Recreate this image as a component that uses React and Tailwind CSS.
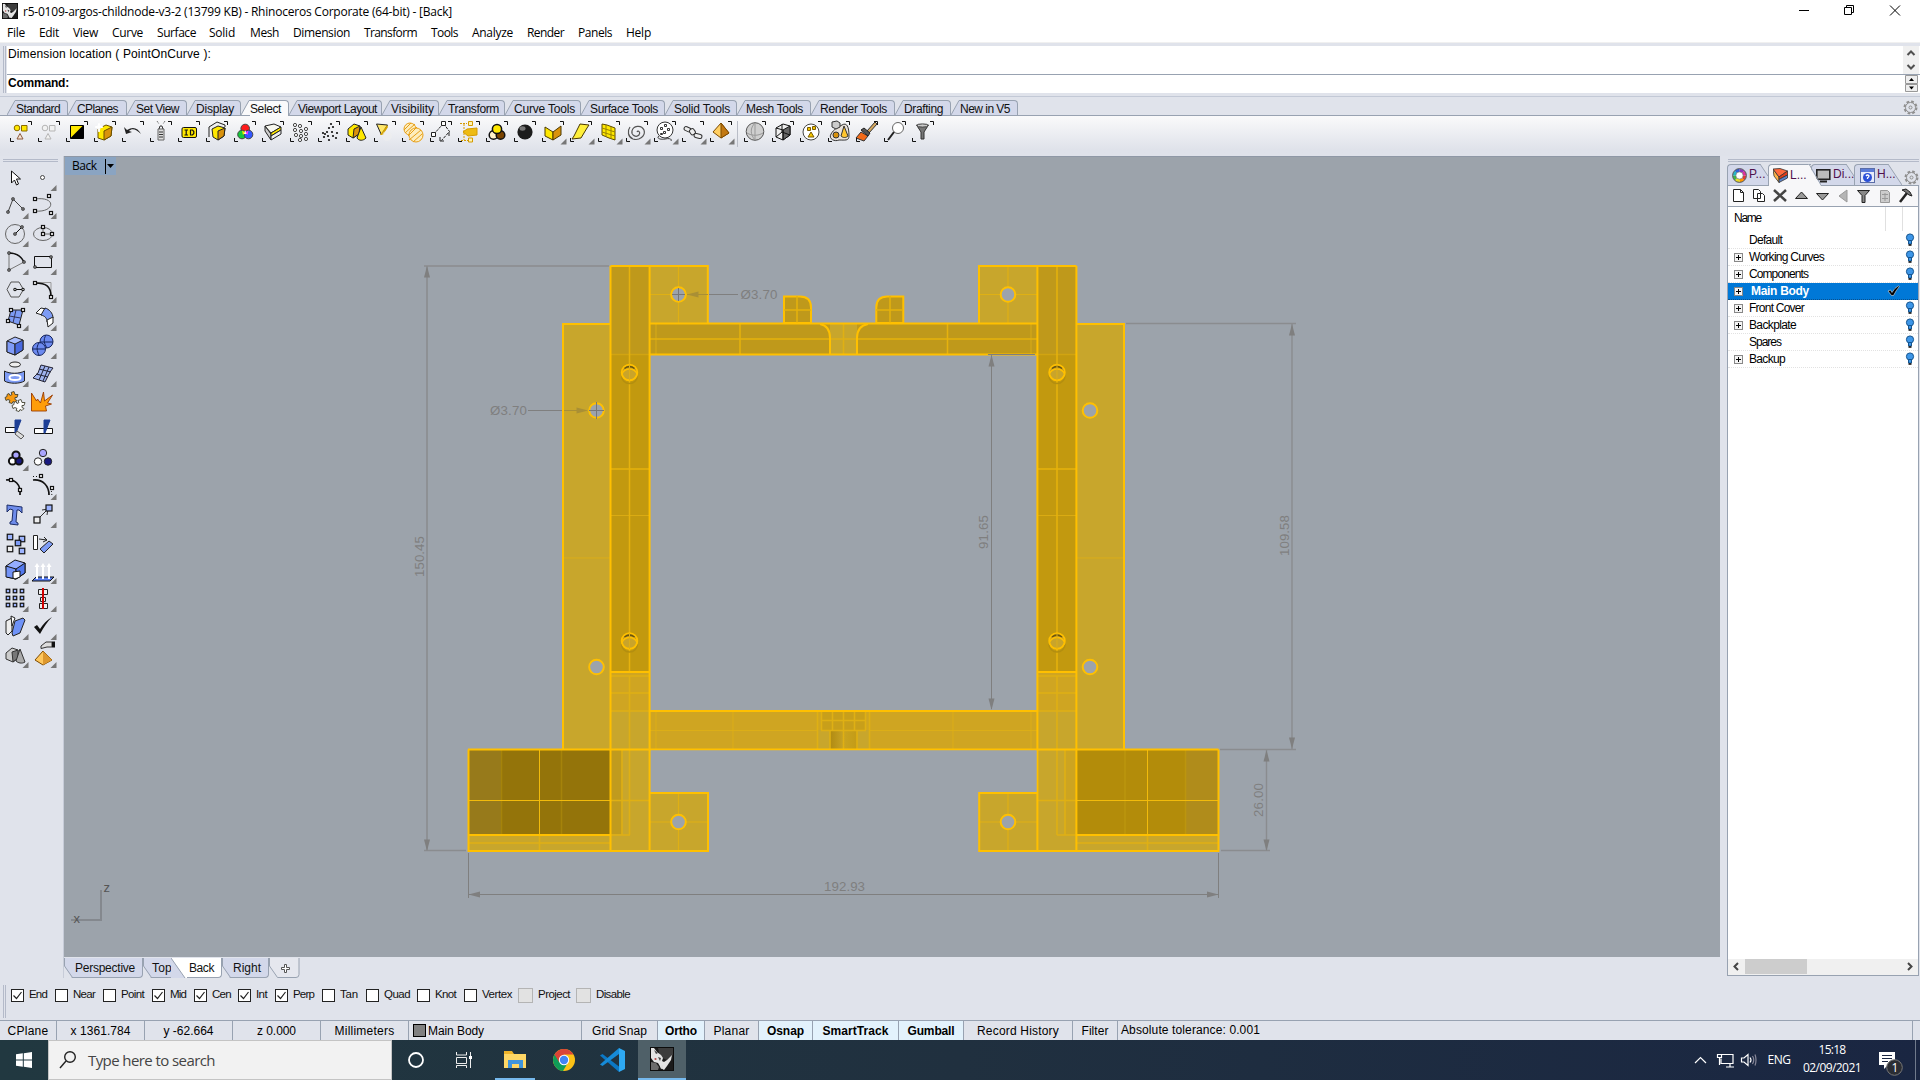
import React, { useLayoutEffect, useRef, useState } from "react";

/* Text whose letter spacing is adjusted so that it fills `w` pixels. */
function Fit({ w, className = "", children }) {
  const ref = useRef(null);
  const [sp, setSp] = useState(0);
  useLayoutEffect(() => {
    const n = String(children).length;
    setSp((w - ref.current.getBoundingClientRect().width) / n);
  }, []);
  return (
    <span ref={ref} className={"inline-block whitespace-pre " + className} style={{ letterSpacing: sp + "px" }}>
      {children}
    </span>
  );
}

const SEGOE = "font-['Open_Sans','Noto_Sans',sans-serif]";
const ARIAL = "font-['Liberation_Sans',Arial,sans-serif]";

function RhinoMark({ className }) {
  return (
    <svg className={className} viewBox="0 0 24 24">
      <rect width="24" height="24" fill="#1b1b1b" />
      <path d="M8 1h15v7l-6 5-7-3z" fill="#3c3c3c" />
      <path d="M1 1h3l3 4 4 3 2 3-1 3 2 1 3-2 5-5-1 5-4 6-3 4-3-2-3-5-4-1-3-4z" fill="#e4e4e4" />
      <path d="M1 15l5 1 3 4-1 3H1z" fill="#6c6c6c" />
      <path d="M4 3l4 3-2 1zM8 10l3 1-1 3z" fill="#444" />
      <circle cx="5.500" cy="12" r="1.100" fill="#b04a4a" />
      <path d="M10 19l3-1v3l-2 1z" fill="#ddd" />
      <rect x=".5" y=".5" width="23" height="23" fill="none" stroke="#0c0c0c" />
    </svg>
  );
}

const MENUS = [["File", 32, 18], ["Edit", 34, 20], ["View", 39, 25], ["Curve", 45, 31], ["Surface", 52, 39], ["Solid", 41, 26], ["Mesh", 43, 29], ["Dimension", 71, 57], ["Transform", 67, 53], ["Tools", 41, 27], ["Analyze", 55, 41], ["Render", 51, 37], ["Panels", 48, 34], ["Help", 40, 25]];

function TitleAndMenu() {
  return (
    <div className={"bg-white h-[42px] shrink-0 text-[12px] text-black " + SEGOE}>
      <div className="flex items-center h-[22px] pl-[2px]">
        <RhinoMark className="w-[16px] h-[16px]" />
        <Fit w={429} className="ml-[5px] mt-px">r5-0109-argos-childnode-v3-2 (13799 KB) - Rhinoceros Corporate (64-bit) - [Back]</Fit>
        <div className="flex-1" />
        <svg className="w-[120px] h-[22px]" fill="none" stroke="#000">
          <path d="M3 10.500h10" />
          <path d="M48.500 7.500h7v7h-7zM50.500 7.500v-2h7v7h-2" />
          <path d="M94 5.500l10 10M104 5.500l-10 10" />
        </svg>
        <div className="w-[4px]" />
      </div>
      <div className="flex items-center h-[21px] pl-[7px]">
        {MENUS.map(([t, slot, w]) => (
          <div key={t} className="shrink-0" style={{ width: slot }}><Fit w={w}>{t}</Fit></div>
        ))}
      </div>
    </div>
  );
}

function CommandArea() {
  return (
    <div className={"h-[55px] shrink-0 flex flex-col text-[12px] text-black border-b border-[#c3c9d6] " + ARIAL}>
      <div className="h-[1px] bg-[#f0f0f0]" />
      <div className="h-[3px]" />
      <div className="flex">
        <div className="w-[7px] pl-[3px] flex gap-[1px]"><i className="w-px bg-[#b4bac9]" /><i className="w-px bg-[#b4bac9]" /></div>
        <div className="flex-1">
          <div className="h-[29px] bg-white border-b border-[#98a2b1] flex justify-between">
            <Fit w={203} className="ml-px leading-[17px]">Dimension location ( PointOnCurve ):</Fit>
            <svg className="w-[16px] h-[28px] mr-px bg-[#f0f0f0]" fill="none" stroke="#505050" strokeWidth="2"><path d="M4.500 9l3.500-3.500L11.500 9M4.500 19L8 22.500 11.500 19" /></svg>
          </div>
          <div className="h-[18px] bg-white flex justify-between">
            <Fit w={61} className="ml-px font-bold leading-[16px]">Command:</Fit>
            <svg className="w-[15px] h-[18px] mr-px"><path d="M1.500.5h12v8h-12zM1.500 9.500h12v7h-12z" fill="#eee" stroke="#999" /><path d="M5 6h5L7.500 3zM5 11.500h5l-2.500 3z" fill="#000" /></svg>
          </div>
        </div>
      </div>
    </div>
  );
}

const TABS = [["Standard", 61, 44], ["CPlanes", 59, 41], ["Set View", 60, 43], ["Display", 54, 38], ["Select", 48, 31], ["Viewport Layout", 93, 79], ["Visibility", 57, 43], ["Transform", 66, 51], ["Curve Tools", 76, 61], ["Surface Tools", 84, 68], ["Solid Tools", 72, 56], ["Mesh Tools", 74, 57], ["Render Tools", 84, 67], ["Drafting", 56, 39], ["New in V5", 67, 50]];

function ToolTabs() {
  return (
    <div className={"h-[19px] shrink-0 flex items-end text-[12px] text-[#111] border-b border-[#98a2b1] pl-[7px] pr-[2px] " + ARIAL}>
      {TABS.map(([t, slot, w]) => {
        const on = t === "Select";
        return (
          <div key={t} className="flex h-[15px] shrink-0" style={{ width: slot }}>
            <svg className="w-[9px] h-[15px] shrink-0"><path d="M0 15L8 1h2v15z" fill={on ? "#fafafb" : "#d3d8ea"} /><path d="M0 15L8 .5h2" fill="none" stroke="#98a2b1" /></svg>
            <div className={"flex-1 border-t border-r border-[#98a2b1] rounded-tr-[4px] leading-[16px] " + (on ? "bg-[#fafafb] h-[16px]" : "bg-[#d3d8ea] h-[15px]")}><Fit w={w}>{t}</Fit></div>
          </div>
        );
      })}
      <div className="flex-1" />
      <Gear />
    </div>
  );
}

function Gear() {
  return (
    <svg className="w-[15px] h-[15px] shrink-0" viewBox="0 0 15 15" fill="none" stroke="#8f8f8f">
      <circle cx="7.500" cy="7.500" r="6" strokeWidth="2" strokeDasharray="2.700 2" />
      <circle cx="7.500" cy="7.500" r="5" />
      <circle cx="7.500" cy="7.500" r="1.500" />
    </svg>
  );
}

const Y = "#ffe800", K = "#222", O = "#d9920c";
const TOP_ICONS = [
  <g stroke="#8a6a00"><circle cx="10" cy="10" r="2.800" fill={Y} /><path d="M14.500 7.500h5.500v5.500h-5.500z" fill={Y} /><path d="M10 21l3-5.500 3 5.500z" fill="#f4e3d6" stroke="#8d5a3c" /></g>,
  <g stroke="#b5b5b5" fill="#f2f2f2"><circle cx="10" cy="10" r="2.800" /><path d="M14.500 7.500h5.500v5.500h-5.500zM10 21l3-5.500 3 5.500z" /></g>,
  <g><path d="M7.500 7.500h13v13h-13z" fill="#000" stroke="#000" /><path d="M8 8h11.500L8 19.500z" fill={Y} /></g>,
  <g stroke="#6b5000"><path d="M7 11l8-4 6 2-1 9-7 4-6-2z" fill={Y} /><path d="M13 13l8-4-1 9-7 4z" fill={O} /><path d="M8 5l1 3 3 1-3 1-1 4-1-4-3-1 3-1z" fill="#fff" stroke="#fff" /></g>,
  <g><path d="M5 9l2 7 6-2-3-1c3-3 7-2 12 3-3-6-8-8-14-4z" fill={K} /></g>,
  <g fill="none" stroke="#666"><path d="M11 11h6v11h-6z" fill="#ddd" /><path d="M12 11l1-3h2l1 3M12 14h4M12 16.500h4M12 19h4" stroke="#333" /><path d="M10 3l2 3M18 3l-2 3" stroke="#777" strokeDasharray="2 1" /></g>,
  <g><rect x="7" y="9.500" width="14.500" height="10" rx="1.500" fill={Y} stroke="#111" /><path d="M9.500 12h3.500M9.500 17H13M11.200 12v5M15.500 12v5M15 12h2.500l1.300 1.500v2L17.500 17H15" fill="none" stroke="#111" strokeWidth="1.200" /></g>,
  <g stroke={K}><path d="M6 19V9l8-5 8 3v2" fill="#eee" /><path d="M9 11l6-3 7 2-1 8-6 4-5-3z" fill={Y} /><path d="M15 13l7-3-1 8-6 4z" fill={O} /></g>,
  <g stroke="#444"><circle cx="14.200" cy="10.500" r="4.300" fill="#ff1a1a" /><circle cx="11" cy="16.500" r="4.300" fill="#14c93a" /><circle cx="17.500" cy="16.500" r="4.300" fill="#3358ff" /><path d="M14.200 12.500l2 3.500h-4z" fill="#fff" stroke="none" /><path d="M11 12.500l3 2-2 2.500z" fill="#ffe600" stroke="none" /><path d="M17.500 12.500l-3 2 2 2.500z" fill="#f3f" stroke="none" /></g>,
  <g stroke={K}><path d="M6 8l6 8v6l-6-9z" fill="#ccc" /><path d="M6 8l9-2 7 3-10 6z" fill="#f8f8f0" /><path d="M12 15l10-6v3l-10 6z" fill={Y} /><path d="M12 18l10-6v4l-10 6z" fill="#eee" /></g>,
  <g fill="#fff" stroke="#444">{[[8, 7], [13, 8], [8, 12], [14, 13], [19, 11], [9, 17], [14, 18], [19, 16], [19, 21], [13, 22]].map((p, i) => <circle key={i} cx={p[0]} cy={p[1]} r="1.600" />)}</g>,
  <g fill="#111">{[[16, 6], [18, 9], [14, 10], [8, 15], [12, 14], [17, 14], [9, 19], [13, 18], [18, 18], [22, 15], [21, 20], [14, 22], [10, 16]].map((p, i) => <circle key={i} cx={p[0]} cy={p[1]} r="1.100" />)}</g>,
  <g stroke={K}><path d="M5 11l6-5 6 2-1 8-6 4-5-3z" fill={Y} /><path d="M11 11l6-3-1 8-6 4z" fill={O} /><path d="M18 9l5 11c-3 3-7 3-9 0z" fill={Y} /></g>,
  <g><path d="M5.500 6l11 1-6 10z" fill="#ffe76a" stroke={K} /><path d="M9 17l7-10 1 2-5 8z" fill="#d3a200" /><circle cx="16" cy="18" r="5" fill="#eeeeef" opacity=".6" /></g>,
  <g><circle cx="11" cy="11" r="6" fill="#fdedbd" stroke="#e79f16" /><circle cx="17" cy="17" r="7" fill="#fdedbd" stroke="#e79f16" /><path d="M5 12l7-7M6 15l10-9M9 18l9-9M10 22l12-10M14 24l9-8" stroke="#e79f16" /></g>,
  <g fill="#fff" stroke="#222"><path d="M16.500 5.500l6 8-8 9M6.500 16.500l9-10" fill="none" strokeDasharray="3 1" /><path d="M14.500 3.500h4v4h-4zM4.500 14.500h4v4h-4z" /><path d="M13 23v-4M13 23h4M22 14v4" /></g>,
  <g fill="none" stroke="#d49b00"><path d="M5 5.500h7M9 6v16M6 22.500h7" strokeDasharray="2 1" /><path d="M13.500 3.500h4v4h-4zM13.500 20h4v4h-4z" fill="#fff3b0" /><path d="M8 14l4-3 10-1v7l-9 1z" fill="#eebb12" /></g>,
  <g stroke="#111" strokeWidth="1.500"><circle cx="10.500" cy="17" r="4.300" fill="#fff2c9" /><circle cx="17.500" cy="17" r="4.300" fill="#7a4300" /><circle cx="14" cy="11" r="4.600" fill={Y} /></g>,
  <g><circle cx="14" cy="14" r="7.600" fill="#1c1c1c" /><ellipse cx="11.500" cy="10.500" rx="3" ry="2.200" fill="#777" /></g>,
  <g stroke="#4a3800"><path d="M6 9l8 5v8l-8-4z" fill={Y} /><path d="M14 14l8-6v9l-8 5z" fill={O} /></g>,
  <path d="M13 6l9 1-2 3-6 10-9 1 2-3z" fill="#ffef3a" stroke="#4a3800" />,
  <g stroke="#5c4a00"><path d="M7 6l5 1 8 3v12l-6-2-7-3z" fill={Y} /><path d="M11 7v12M16 9v12M7 10l13 4M7 14l13 4" fill="none" stroke="#9a8300" /></g>,
  <path d="M14 14c1-2 4 0 2 3-3 3-8 0-7-4 1-5 9-7 12-1 2 6-5 11-11 9-5-2-6-8-3-12" fill="none" stroke="#555" strokeWidth="1.200" />,
  <g stroke="#333" fill="#fff"><circle cx="14" cy="12" r="8" /><path d="M9.500 9.500h2v2h-2zM13.500 6.500h2v2h-2zM16.500 10.500h2v2h-2zM12.500 13.500h2v2h-2zM9.500 15.500h2v1h-2z" /><path d="M8 18c-3 2 1 4 6 3s7 0 6 2" fill="none" /></g>,
  <g fill="#eee" stroke="#333"><rect x="5" y="9" width="7" height="4" rx="2" transform="rotate(25 8 11)" /><rect x="11" y="11" width="5" height="6" rx="2" transform="rotate(-35 13 14)" /><rect x="15" y="16" width="8" height="4" rx="2" transform="rotate(15 19 18)" /></g>,
  <g stroke="#7d4a00"><path d="M14 5l8 10-8 5-8-6z" fill="#ffcf63" /><path d="M14 5l8 10-8 5z" fill="#c27812" /></g>,
  null,
  <g stroke="#555" fill="none"><circle cx="14" cy="13.500" r="8.800" fill="#cfcfcf" /><path d="M14 5c-5 5-5 11 0 17M6 15c5 3 11 3 16 0M14 5v17" stroke="#999" /></g>,
  <g stroke="#111"><path d="M7 10l7-4 7 2v9l-7 5-7-3z" fill="#eee" /><path d="M14 12l7-4v9l-7 5z" fill="#666" /><path d="M7 10l7 2v10M7 19l6-5 8 3M13 6v8" fill="none" /></g>,
  <g stroke="#444"><circle cx="14" cy="14" r="8" fill="#fff" /><path d="M10.500 9.500h3v3h-3zM15.500 8.500h3v3h-3zM11 19l3-5 3 5z" fill="#f4c500" stroke="#7a5c00" /></g>,
  <g stroke="#333"><path d="M6 16c-3 5 4 8 8 6 6 0 10 1 10-4 0-9-2-14-7-11-4 2-8 4-11 9z" fill="#e9e2da" /><path d="M7 4l5-1 3 2v4l-4 2-4-2z" fill="#ccc" /><circle cx="11" cy="17" r="3" fill={O} /><path d="M19 8l4 10c-2 2-5 2-7 0z" fill="#ffc52e" /></g>,
  <g><path d="M22 4l2 2-8 9-2-2z" fill="#d5a860" stroke="#333" /><path d="M8 14l7 4-4 5-8-3z" fill="#f36a18" stroke="#333" /><path d="M8 12l3-2 6 5-2 3z" fill="#555" stroke="#222" /></g>,
  <g><circle cx="17" cy="10" r="5.500" fill="#fff" stroke="#666" /><path d="M13 14l-6 8" stroke="#222" strokeWidth="2" /></g>,
  <g><path d="M7.500 7h12l-4.500 7v7h-3v-7z" fill="#777" stroke="#333" /><ellipse cx="13.500" cy="7.500" rx="5.500" ry="1.600" fill="#ccc" stroke="#444" /></g>,
];

function Toolbar() {
  return (
    <div className="h-[40px] shrink-0 flex pl-[7px] pt-[2px] bg-linear-to-b from-[#fafafb] to-[#dfe2ea] to-85%">
      {TOP_ICONS.map((ic, i) =>
        ic === null ? <div key={i} className="w-[4px] h-[26px] border-l border-[#b9bdc7] ml-[2px] mt-[3px] shrink-0" /> : (
          <svg key={i} className="w-[28px] h-[28px] shrink-0" viewBox="0 0 28 28">
            {ic}
            <path d="M21 3.500h3.500V7M3.500 20v3.500H7" fill="none" stroke="#111" />
            {i >= 19 && i <= 25 && <path d="M27.500 20.500v6h-6z" fill="#777" />}
          </svg>
        )
      )}
    </div>
  );
}

const B = "#7d9bf5", D = "#222";
const sq = (x, y, f = "#fff", s = 3) => <rect key={x + "-" + y} x={x - s / 2} y={y - s / 2} width={s} height={s} fill={f} stroke="#111" strokeWidth="1.200" />;
const dot = (x, y) => <circle key={x + "-" + y} cx={x} cy={y} r="1.200" fill="#fff" stroke="#111" strokeWidth="1.100" />;
const SIDE_ICONS = [
  <path d="M10.500 7v12l3-3 2 5 2-1-2-5h4z" fill="#fff" stroke="#111" />,
  <circle cx="13.500" cy="13.500" r="2" fill="#fff" stroke="#444" />,
  <g fill="none" stroke="#444"><path d="M7 20l5-13 10 10" />{dot(7, 20)}{dot(12, 7)}{dot(22, 17)}</g>,
  <g fill="none" stroke="#666"><path d="M6 7c22-3 20 14 0 12" />{sq(6, 7)}{sq(20, 4)}{sq(6, 19)}{sq(22, 21)}</g>,
  <g fill="none" stroke="#666"><circle cx="14" cy="14" r="9.500" /><path d="M14 14l6-6" stroke="#111" />{dot(14, 14)}{dot(21, 7)}</g>,
  <g fill="none" stroke="#666"><ellipse cx="14" cy="14" rx="9.500" ry="6.500" /><path d="M14 7v7h9" />{sq(14, 7)}{sq(14, 14)}{sq(23, 14)}</g>,
  <g fill="none" stroke="#777"><path d="M8 22V5M8 22l15-8" /><path d="M8 5c7 0 12 3 15 9" stroke="#111" strokeWidth="1.400" />{dot(8, 5)}{dot(23, 14)}{dot(8, 22)}</g>,
  <g fill="none"><path d="M5.500 8.500h17v11h-17z" stroke="#111" />{dot(22, 9)}{dot(6, 19)}</g>,
  <g fill="none" stroke="#555"><path d="M10 6h8l4.500 7.500L18 21h-8l-4-7.500z" /><path d="M14 13.500h8" stroke="#111" />{dot(14, 13.500)}{dot(22, 13.500)}</g>,
  <g fill="none"><path d="M6 6.500h16V22" stroke="#999" /><path d="M6 7c11 0 16 3 16 14" stroke="#111" strokeWidth="1.600" />{sq(6, 7)}{sq(22, 21)}</g>,
  <g stroke={D}><path d="M10 6l12 0-4 15-11-4z" fill={B} /><path d="M15 6l-3 13M8.500 12l11 2" stroke="#335" fill="none" />{sq(10, 6)}{sq(22, 6)}{sq(7, 17)}{sq(18, 22)}</g>,
  <g stroke={D}><path d="M7 9l5-5 5 1-4 6z" fill="#fff" /><path d="M12 11l4-7c4 1 8 5 8 10l-6 4c0-4-2-6-6-7z" fill={B} /><path d="M18 16l6-3v6l-5 4z" fill="#fff" /></g>,
  <g stroke={D}><path d="M6 9l8-4 8 3v10l-8 5-8-3z" fill="#a9bdff" /><path d="M6 9l8 3v11l-8-3z" fill="#7f9bf8" /><path d="M14 12l8-4v10l-8 5z" fill="#4a6ae0" /></g>,
  <g stroke="#15245c"><circle cx="17.500" cy="9.500" r="6.500" fill="#6c8af0" /><circle cx="10" cy="17" r="6.500" fill="#6c8af0" /><path d="M17 3c-3 5-2 8 1 13M11 10h13M10 11c-3 4-2 8 0 12M4 17h12" fill="none" /></g>,
  <g stroke={D}><ellipse cx="14" cy="4.500" rx="5.500" ry="2.500" fill="#eee" /><path d="M3.500 11c5 3 15 3 20 0v10c-5 3-15 3-20 0z" fill={B} /><ellipse cx="14" cy="17.500" rx="5.500" ry="2.500" fill="none" stroke="#fff" strokeWidth="2" /></g>,
  <g stroke="#223"><path d="M12 5l12 3-3 4-5 10-12-4 5-5z" fill="#9fb3ee" /><path d="M10 9l12 3M7 14l12 3M16 6l-6 14M20 7l-6 14" fill="none" /></g>,
  <g stroke="#443" strokeWidth=".9">
    <path d="M6 6.500l2-1 1 2 2-1-1-2 3-1 1 3 3 0-1 3-2 0 0 2 2 1-2 2-2-1-1 2-3-1 1-2-2-1-2 1-1-3 2-1z" fill="#f79a12" />
    <path d="M13 14.500l2-1 1 2 2-1-1-2 3-1 1 3 3 0-1 3-2 0 0 2 2 1-2 2-2-1-1 2-3-1 1-2-2-1-2 1-1-3 2-1z" fill="#fff" />
  </g>,
  <path d="M2.500 5l5 8 1-2 3 4 3-11 1 9 8-6-5 8 4 1-6 2 1 5H2.500z" fill="#ff9d0a" stroke="#9a3a00" strokeWidth=".9" />,
  <g stroke="#111"><path d="M4.500 11.500h10v5h-10z" fill="#fff" /><path d="M14 4h6l-5 13h-1z" fill="#1d3f96" stroke="#1d3f96" /><path d="M16 15l7 5-3 3-6-5z" fill="#ddd" stroke="#555" /></g>,
  <g stroke="#111"><path d="M5.500 12.500h18v5h-18z" fill="#fff" /><path d="M15 4h6l-5 13h-1z" fill="#1d3f96" stroke="#1d3f96" /></g>,
  <g stroke="#111" strokeWidth="2"><circle cx="11.500" cy="17" r="3.600" fill="#fff" /><circle cx="18" cy="17" r="3.600" fill="#1a1a80" /><circle cx="15" cy="11" r="3.600" fill="#a9a4ff" /></g>,
  <g stroke="#222"><circle cx="14" cy="9" r="3.700" fill="#a9a4ff" /><circle cx="9" cy="17.500" r="3.700" fill="#fff" /><circle cx="19" cy="17.500" r="3.700" fill="#1a1a80" /></g>,
  <g fill="none" stroke="#111"><path d="M5 7c9-1 15 4 14 15" strokeWidth="1.700" />{sq(10, 7)}{sq(19, 17)}</g>,
  <g fill="none" stroke="#111"><path d="M4 7c10-1 16 6 16 15" strokeWidth="1.700" /><path d="M4 3.500h8M22 15l1 8" strokeDasharray="1 2" />{sq(12, 3)}{sq(23, 15)}</g>,
  <g stroke="#1c2d66"><path d="M6 4l15 2v6l-3-3h-2l-1 12 2 1v2l-8-1v-2l2-1 1-11-3-1-3 3z" fill="#6e8ceb" /></g>,
  <g fill="none" stroke="#333"><path d="M10 17l9-9M13 9l6-1-1 6" />{sq(20, 7, "#9db4ff", 6)}{sq(8, 19, "#eee", 6)}</g>,
  <g>{sq(9, 8, "#9db4ff", 5.500)}{sq(21, 10, "#9db4ff", 5.500)}{sq(17, 14, "#7d9bf5", 5.500)}{sq(9, 20, "#eee", 5.500)}{sq(21, 22, "#9db4ff", 5.500)}</g>,
  <g stroke="#222"><path d="M4.500 6.500h4v14h-4z" fill="#fff" /><path d="M20 12l4 3-9 9-4-4z" fill={B} /><path d="M10 10l8 1-3-3M18 11l-4 2" fill="none" /></g>,
  <g stroke="#111"><path d="M5 9l9-6 10 3v10l-9 6-9-2z" fill="#94adff" /><path d="M5 9l10 3v10l-10-2z" fill="#7393f6" /><path d="M15 12l9-6v10l-9 6z" fill="#5278ed" /><path d="M12 15l7-1v6l-5 2-2-1z" fill="#fff" /></g>,
  <g><path d="M7 20h18l-4 4H3z" fill="#577cf0" stroke="#111" /><path d="M8 22V9M14 22V9M20 22V9" stroke="#fff" strokeWidth="2" /><path d="M5.500 10L8 6l2.500 4zM11.500 10L14 6l2.500 4zM17.500 10L20 6l2.500 4z" fill="#fff" /></g>,
  <g>{[7, 14, 21].flatMap((x) => [6, 13, 20].map((y) => sq(x, y, "#9db4ff", 3.500)))}</g>,
  <g stroke="#222"><path d="M9.500 4.500h9v5h-9zM11.500 12.500h5v4h-5zM10.500 18.500h8v5h-8z" fill="#eee" /><path d="M14 3v21" stroke="#d00000" strokeWidth="2" /></g>,
  <g stroke="#222"><path d="M5 8l6-3v13l-4 4-2-2z" fill="#eee" /><path d="M10 3l4 2-3 8z" fill="#fff" /><path d="M14 8l8-3 2 2-5 13-7 3-1-3z" fill="#6f93f7" /></g>,
  <path d="M5 14l3-2 3 4C14 11 18 7 23 4c-5 5-8 10-12 17z" fill="#111" />,
  <g stroke="#333"><path d="M5 12l6-5 6 2v8l-5 4-7-3z" fill="#ccc" /><path d="M11 11l6-2v8l-5 4z" fill="#777" /><path d="M19 8l5 13c-3 2-7 1-9-1z" fill="#aaa" /></g>,
  <g><path d="M14 10l9 9-9 5-8-5z" fill="#ffc75c" stroke="#7d4a00" /><path d="M14 10l9 9-9 5z" fill="#dd982e" /><path d="M12 5l5-4h6v5h-5l-6 1.500z" fill="#ddd" stroke="#333" /><path d="M23 .5h3v6h-3z" fill="#111" /></g>,
];

function SideBar() {
  return (
    <div className="w-[64px] shrink-0 pt-[3px] border-r border-[#c7ccd8]">
      <div className="ml-[3px] w-[55px] h-[3px] border-y border-[#b4bac9]" />
      <div className="grid grid-cols-[28px_28px] auto-rows-[28.060px] ml-px mt-[2px]">
        {SIDE_ICONS.map((ic, i) => (
          <svg key={i} className="w-[28px] h-[28px] overflow-visible" viewBox="0 0 28 28">
            {ic}
            {![0, 16, 17, 18, 19, 21, 22, 24, 26, 27].includes(i) && <path d="M27.500 21v6h-6z" fill="#777" />}
          </svg>
        ))}
      </div>
    </div>
  );
}

const G = "#ffc000";
const R = ({ x, y, x2, y2, f }) => <rect x={x} y={y} width={x2 - x} height={y2 - y} fill={f} />;
const DIM = "#7f7f7f";
const Arrow = ({ x, y, d, c = DIM }) => <path transform={`translate(${x} ${y}) rotate(${d})`} d="M0 0L-11.500 3V-3z" fill={c} />;

function Viewport() {
  const holes = [[678.5, 294.5], [1008, 294.5], [596.5, 410.5], [1090, 410.5], [596.5, 667], [1090, 667], [678.5, 822], [1008, 822]];
  return (
    <svg className="w-[1656px] h-[801px] block bg-[#9ca3ab]" viewBox="64 156 1656 801" fontFamily="Liberation Sans, Arial, sans-serif">
      <path d="M64 156.500h1656" stroke="#8f98a6" />
      {/* flanges */}
      <R x={563} y={323.5} x2={611} y2={749.5} f="#c8a62c" />
      <R x={1076.5} y={323.5} x2={1124} y2={749.5} f="#c8a62c" />
      <R x={650} y={266} x2={708} y2={323} f="#c8a62c" />
      <R x={979} y={266} x2={1037} y2={323} f="#c8a62c" />
      <R x={650} y={793} x2={708} y2={851} f="#c8a62c" />
      <R x={979} y={793} x2={1037} y2={851} f="#c8a62c" />
      {/* columns */}
      {[610.5, 1037.3].map((x) => (
        <g key={x}>
          <R x={x} y={266} x2={x + 39} y2={354} f="#bf991b" />
          <R x={x} y={354} x2={x + 39} y2={672} f="#c2990f" />
          <R x={x} y={672} x2={x + 39} y2={711} f="#cfa522" />
          <R x={x} y={711} x2={x + 39} y2={851} f="#c8a62c" />
        </g>
      ))}
      {/* top and bottom cross bars */}
      <R x={650} y={323.5} x2={1037} y2={354} f="#bf991b" />
      <R x={830} y={323.5} x2={857} y2={354} f="#c8a62c" />
      <R x={650} y={711} x2={1037} y2={749.5} f="#cfa522" />
      <R x={818} y={730} x2={870} y2={749.5} f="#c8a62c" />
      <R x={821} y={711} x2={866} y2={730} f="#c89f1a" />
      <defs><linearGradient id="slot"><stop offset="0" stopColor="#b08a12" /><stop offset=".45" stopColor="#c5a023" /><stop offset=".55" stopColor="#c9a31f" /><stop offset="1" stopColor="#c39b17" /></linearGradient></defs>
      <R x={830} y={731} x2={857} y2={749} f="url(#slot)" />
      {/* feet */}
      <R x={468} y={749.5} x2={611} y2={851} f="#c8a62c" />
      <R x={468} y={749.5} x2={501} y2={834} f="#977a1b" />
      <R x={501} y={749.5} x2={610.5} y2={834} f="#94740a" />
      <R x={610.5} y={749.5} x2={622} y2={834} f="#c09b1e" />
      <R x={1076.5} y={749.5} x2={1218.5} y2={851} f="#c8a62c" />
      <R x={1076.5} y={749.5} x2={1186} y2={834} f="#b38c0a" />
      <R x={1186} y={749.5} x2={1218.5} y2={834} f="#b08c1b" />
      <R x={1065} y={749.5} x2={1076.5} y2={834} f="#cca421" />
      <path d="M784 323V296.500h16q11 0 11 11V323zM903.300 323V296.500h-16q-11 0-11 11V323z" fill="#bf991b" stroke={G} strokeWidth="2" />
      {/* faint hidden edges */}
      <g fill="none" stroke="#dfb014" strokeWidth="1.600">
        <path d="M611 354.500h39M1037 354.500h39" opacity=".5" />
        <path d="M611 676h39M1037 676h39M611 693h39M1037 693h39M611 711h39M1037 711h39" />
        <path d="M611 515.500h39M1037 515.500h39M563 558h48M1076 558h48M650 730.500h167M870 730.500h167M733 711v38M953 711v38M656 324v30M1031 324v30M656 711v38M1031 711v38" strokeWidth=".8" />
        <path d="M678.500 266v57M650 294.500h58M1008 266v57M979 294.500h58M678.500 793v58M650 822h58M1008 793v58M979 822h58" strokeWidth="1.200" />
        <path d="M817.500 711v38M821.500 711v19M865.500 711v19M869.500 711v38M821 730.500h45M830 731v18M857 731v18M832.500 711v19M843.500 711v38M854.500 711v19M821 720.500h45M843.500 324v30M830 339h27" />
        <path d="M468 843h143M1077 843h142M539.500 835v16M1147.500 835v16M611 800.500h39M1037 800.500h39M622 750v85M1065 750v85M611 835h19M1057 835h19M629.500 676v159M1057 676v159" />
      </g>
      <g stroke="#a5830b" strokeWidth="1.500"><path d="M501.500 750v84M561.500 750v84" /><path d="M1125 750v84M1185.500 750v84" stroke="#bc950e" /></g>
      {/* isocurves */}
      <g fill="none" stroke="#e6b20d" strokeWidth="1.500">
        <path d="M629.500 266v406M1057 266v406M611 469h39M1037 469h39M650 339h180M857 339h180M740 324v30M947.500 324v30M797 296v27M784 310h27M890 296v27M876 310h27" />
        <path d="M539.500 750v84M468 800.500h143M1147.500 750v84M1077 800.500h142" stroke="#f2bb0c" strokeWidth="1" />
      </g>
      {/* outlines */}
      <g fill="none" stroke={G} strokeWidth="2">
        <path d="M610.500 324H563v425.500M1076.500 324h47.500v425.500M610.500 266v585M649.600 266v585M1037.400 266v585M1076.400 266v585M610.500 266h97.300v57M1076.500 266H979v57" />
        <path d="M650 323.500h387M650 354.500h387M650 711h387M468 749.500h750.500M611 672h39M1037 672h39" />
        <path d="M820 324q10 2 10 14v16M868 324q-11 2-11 14v16" />
        <path d="M468.500 749.500v101.500H708v-58h-58M1218.500 749.500v101.500H979.200v-58h58M468 835h143M1077 835h142" />
      </g>
      {/* gap between the feet */}
      <rect x="651" y="750.500" width="385.500" height="41.500" fill="#9ca3ab" />
      {[[629.5, 372.5], [1057, 372.5], [629.5, 641], [1057, 641]].map(([x, y]) => (
        <g key={x + "," + y} fill="none">
          <path d={`M${x - 8} ${y + 3}a8 8 0 0 0 16 0`} stroke="#b38e10" strokeWidth="1.500" />
          <circle cx={x} cy={y} r="7.800" fill="#b9922a" stroke={G} strokeWidth="1.800" />
          <path d={`M${x - 5} ${y - 4}q5-4 10 0`} stroke="#6b560a" strokeWidth="1.500" />
          <path d={`M${x - 7.5} ${y + 1.5}q2-5 7.500-5t7.500 5q-2 6-7.500 6t-7.500-6z`} fill="#c9a42a" stroke={G} strokeWidth="1.400" />
          <path d={`M${x} ${y - 8}v16`} stroke="#dcae18" />
        </g>
      ))}
      {holes.map(([x, y]) => <circle key={x + "," + y} cx={x} cy={y} r="7.300" fill="#9ca3ab" stroke={G} strokeWidth="2" />)}
      <path d="M678.500 288v13M672 294.500h13M596.500 402v17M589 410.500h15" stroke="#777" />
      {/* dimensions */}
      <g fill="none" stroke={DIM}>
        <path d="M427 266v585M424 266h185M424 850.500h42" stroke="#8a8c8f" strokeWidth="1.600" />
        <path d="M468.500 853v45M1218.500 853v45M468.500 894.500h750" />
        <path d="M991.500 355v354M988 354.500h47" />
        <path d="M1292 324v425M1126 323.500h170M1220 749.500h76M1266.500 750v101M1221 850.500h49" stroke="#8a8c8f" strokeWidth="1.400" />
        <path d="M709 294.500h29M528 410.500h34" />
        <path d="M687 294.500h21M564 410.500h20" stroke="#a98f35" />
      </g>
      <Arrow x={427} y={266} d={-90} /><Arrow x={427} y={851} d={90} />
      <Arrow x={468.5} y={894.5} d={180} /><Arrow x={1218.5} y={894.5} d={0} />
      <Arrow x={991.5} y={355} d={-90} /><Arrow x={991.5} y={710} d={90} />
      <Arrow x={1292} y={324} d={-90} /><Arrow x={1292} y={749} d={90} />
      <Arrow x={1266.5} y={750} d={-90} /><Arrow x={1266.5} y={851} d={90} />
      <Arrow x={687} y={294.5} d={180} c="#a98f35" /><Arrow x={588} y={410.5} d={0} c="#a98f35" />
      <g fill={DIM} fontSize="13.300">
        <text x="740.500" y="299" textLength="37">Ø3.70</text>
        <text x="490" y="415" textLength="37">Ø3.70</text>
        <text x="824" y="891" textLength="41">192.93</text>
        <text transform="translate(424 577) rotate(-90)" textLength="41">150.45</text>
        <text transform="translate(988 549) rotate(-90)" textLength="34">91.65</text>
        <text transform="translate(1289 556) rotate(-90)" textLength="41">109.58</text>
        <text transform="translate(1263 817) rotate(-90)" textLength="34">26.00</text>
      </g>
      {/* axis marker */}
      <path d="M71 920h30M101 890v31" stroke="#84888e" strokeWidth="2" fill="none" />
      <g fill="#555" fontSize="13"><text x="103.500" y="892">z</text><text x="73.500" y="922.500">x</text></g>
      {/* viewport title */}
      <rect x="65" y="157" width="51" height="18" fill="#8aa4c2" />
      <text x="72" y="170" fontSize="12" fontFamily="Open Sans, Noto Sans, sans-serif" textLength="25">Back</text>
      <path d="M105.500 159v15" stroke="#000" /><path d="M107 164h7l-3.500 4z" />
    </svg>
  );
}

const VTABS = [["Perspective", 79, 60, 11], ["Top", 37, 20, 9], ["Back", 42, 25, 9], ["Right", 47, 28, 11]];
function ViewTabs() {
  return (
    <div className={"h-[20px] mt-px flex text-[12px] text-[#111] " + ARIAL}>
      {VTABS.map(([t, slot, w, pad]) => {
        const on = t === "Back";
        return (
          <div key={t} className={"relative flex h-[20px] shrink-0 border-r border-b border-[#98a2b1] rounded-br-[4px] " + (on ? "bg-white" : "bg-[#d3d8ea]")} style={{ width: slot }}>
            <svg className={"h-[20px] shrink-0 absolute bottom-[-1px] " + (on ? "w-[16px] left-[-9px]" : "w-[9px] left-0")}>
              {on ? <path d="M0 0L14 20H16V0z" fill="#fff" /> : null}
              <path d={on ? "M0 0v20h14z" : "M0 8v12h8z"} fill={on ? "#d3d8ea" : "#e0e3eb"} />
              <path d={on ? "M0 0L14 20" : "M.5 0v8l8 11.500"} fill="none" stroke="#98a2b1" />
            </svg>
            <span className="relative leading-[21px]" style={{ paddingLeft: pad }}><Fit w={w}>{t}</Fit></span>
          </div>
        );
      })}
      <svg className="w-[32px] h-[20px]"><path d="M.5 0v8l8 11.500H27q3 0 3-3V0" fill="#e5e7ee" stroke="#98a2b1" /><path d="M15.500 6.500h2v3h3v2h-3v3h-2v-3h-3v-2h3z" fill="#fff" stroke="#555" /></svg>
    </div>
  );
}

const LAYERS = [["Default", 0, 33], ["Working Curves", 1, 75], ["Components", 1, 59], ["Main Body", 1, 58], ["Front Cover", 1, 55], ["Backplate", 1, 47], ["Spares", 0, 32], ["Backup", 1, 36]];
const WHEEL = ["#e53935", "#ff9800", "#e8dc20", "#3fb54a", "#26b6c6", "#2962d9", "#8e33c0", "#e0309c"];
const PTABS = [
  ["P...", 41, <g fill="none" strokeWidth="3">{WHEEL.map((c, i) => <path key={c} d="M12.600 7.500A5.200 5.200 0 0 1 11.100 11.200" stroke={c} transform={`rotate(${i * 45} 7.500 7.500)`} />)}<circle cx="7.500" cy="7.500" r="3.600" fill="#fff" stroke="#666" strokeWidth=".6" /><circle cx="7.500" cy="7.500" r="6.900" stroke="#444" strokeWidth=".9" /></g>],
  ["L...", 43, <g stroke="#333" strokeWidth=".8"><path d="M0 1l6 8v5.500L1 8z" fill="#ffb347" /><path d="M0 1l7-.5 7.500 2.500L6 9z" fill="#ff6a3d" /><path d="M6 9l8.500-6v4L6 11.500z" fill="#e33b17" /><path d="M6 11.500L14.500 7v3L6 14.500z" fill="#5d84c9" /></g>],
  ["Di...", 43, <g><rect x=".8" y="1.800" width="13" height="9.500" fill="#bbb" stroke="#222" strokeWidth="1.600" /><path d="M4 13.500h7" stroke="#222" strokeWidth="2" /></g>],
  ["H...", 48, <g><rect x=".5" y=".5" width="14" height="14" fill="#e8ecfa" stroke="#5a6da8" /><path d="M1 1h13v3H1z" fill="#5b7bd8" /><circle cx="7.500" cy="9.500" r="4.500" fill="#2b50d8" /><path d="M6 8q1.500-2 3 0 0 1-1.500 2v1" stroke="#fff" fill="none" strokeWidth="1.300" /></g>],
];

function LayerPanel() {
  return (
    <div className={"w-[200px] shrink-0 pl-[7px] pt-[3px] h-[820px] flex flex-col text-[12px] text-black " + ARIAL}>
      <div className="ml-px w-[191px] h-[3px] border-y border-[#b4bac9] shrink-0" />
      <div className="flex items-end h-[24px] shrink-0 border-b border-[#98a2b1] w-[192px]">
        {PTABS.map(([t, slot, ic], i) => (
          <div key={t} className={"relative flex items-center shrink-0 border-t border-l border-[#98a2b1] rounded-tl-[4px] " + (i === 3 ? "pl-[5px] " : "pl-[4px] ") + (i === 1 ? "bg-[#f7f7f9] h-[22px] mb-[-1px] z-10" : "bg-[#d3d8ea] h-[21px]")} style={{ width: slot }}>
            <svg className="w-[15px] h-[15px] shrink-0">{ic}</svg>
            {i !== 1 && <svg className="absolute right-0 top-[-1px] w-[14px] h-[21px]"><path d={i === 3 ? "M0 0l14 21V0z" : "M6 0l8 12V0z"} fill="#e0e3eb" /><path d={i === 3 ? "M0 0l14 21" : "M6 0l8 12"} stroke="#98a2b1" /></svg>}
            {i === 1 && <svg className="absolute right-[-10px] top-[-1px] w-[13px] h-[22px]"><path d="M0 0l13 22H0z" fill="#f7f7f9" /><path d="M1 0l12 21" stroke="#98a2b1" /></svg>}
            <span className="ml-[2px] mt-[-2px] relative text-[#50104c]">{t}</span>
          </div>
        ))}
        <div className="w-[2px]" /><Gear />
      </div>
      <div className="border border-t-0 border-[#98a2b1] w-[192px] flex-1 bg-white flex flex-col">
        <svg className="w-[190px] h-[21px] bg-[#f7f7f9] shrink-0 border-b border-[#98a2b1]" fill="none" stroke="#222">
          <path d="M5.500 3.500h7l3 3v9h-10zM12.500 3.500v3h3" fill="#fff" />
          <path d="M25.500 3.500h5l2 2v7h-7zM29.500 7.500h5l2 2v6h-7z" fill="#fff" />
          <path d="M46 4l12 11M58 4L46 15" stroke="#444" strokeWidth="2.500" />
          <path d="M67.500 12.500h12l-6-6.500z" fill="#999" />
          <path d="M88.500 7.500h12l-6 6.500z" fill="#999" />
          <path d="M119 4v12l-8-6z" fill="#b5b5b5" stroke="#999" />
          <path d="M129.500 4.500h12l-4.500 5v7h-3v-7z" fill="#888" />
          <path d="M152.500 4.500h7l2 2v10h-9zM154 8.500h6M154 12.500h6M157 7v8" fill="#ccc" stroke="#999" />
          <path d="M172 16l7-9" strokeWidth="2.500" /><path d="M174 4l4-1 4 3 2 4-3-1-5-4z" fill="#777" />
        </svg>
        <div className="flex h-[25px] shrink-0 items-start pl-[6px]"><Fit w={27} className="leading-[23px]">Name</Fit><div className="flex-1" /><div className="w-[18px] h-[24px] border-x border-[#e0e0e0]" /><div className="w-[15px]" /></div>
        {LAYERS.map(([t, plus, w]) => {
          const on = t === "Main Body";
          return (
            <div key={t} className={"flex items-center h-[17px] shrink-0 pl-[6px] pr-[3px] border-b border-dotted " + (on ? "bg-[#0078d7] border-[#0b4f8a] text-white font-bold" : "border-[#e2e2e2]")}>
              <svg className="w-[9px] h-[9px] shrink-0">{plus ? <g><rect x=".5" y=".5" width="8" height="8" fill="#f4f4f4" stroke="#888" /><path d="M2 4.500h5M4.500 2v5" stroke="#000" /></g> : null}</svg>
              <Fit w={w} className={on ? "ml-[8px]" : "ml-[6px]"}>{t}</Fit>
              <div className="flex-1" />
              {on ? <svg className="w-[13px] h-[12px] mr-[15px]"><path d="M1 6l2.500-1L5 7.500Q7.500 3 11.500.8l.7.900Q9 5.500 6.500 10.500h-2z" fill="#000" stroke="#fff" strokeWidth=".5" /></svg>
                : <svg className="w-[10px] h-[14px]"><circle cx="5" cy="4.500" r="3.600" fill="#3d96e8" stroke="#14548f" /><path d="M3.500 7.500h3V11h-3z" fill="#3d96e8" stroke="#14548f" /><path d="M3.500 12h3" stroke="#000" strokeWidth="1.500" /></svg>}
            </div>
          );
        })}
        <div className="flex-1" />
        <div className="h-[16px] shrink-0 bg-[#f0f0f0] flex items-start">
          <svg className="w-[17px] h-[15px]" fill="none" stroke="#444" strokeWidth="2"><path d="M10 4L6.500 7.500 10 11" /></svg>
          <div className="w-[62px] h-[15px] bg-[#cdcdcd]" />
          <div className="flex-1" />
          <svg className="w-[15px] h-[15px]" fill="none" stroke="#444" strokeWidth="2"><path d="M5 4l3.500 3.500L5 11" /></svg>
        </div>
      </div>
    </div>
  );
}

const SNAPS = [["End", 44, 18, 1], ["Near", 48, 22, 0], ["Point", 49, 23, 0], ["Mid", 42, 16, 1], ["Cen", 44, 19, 1], ["Int", 37, 11, 1], ["Perp", 47, 21, 1], ["Tan", 44, 18, 0], ["Quad", 51, 26, 0], ["Knot", 47, 21, 0], ["Vertex", 55, 30, 0], ["Project", 58, 32, 2], ["Disable", 60, 34, 2]];
function SnapBar() {
  return (
    <div className={"h-[42px] shrink-0 flex pl-[3px] pt-[7px] text-[11.5px] text-[#111] " + ARIAL}>
      <div className="w-[3px] h-[33px] border-x border-[#b4bac9] mr-[5px]" />
      <div className="flex h-[20px] items-center">
        {SNAPS.map(([t, slot, w, s]) => (
          <div key={t} className="flex items-center shrink-0" style={{ width: slot }}>
            <svg className={s === 2 ? "w-[15px] h-[15px] ml-[-1px]" : "w-[13px] h-[13px]"} viewBox={s === 2 ? "0 0 15 15" : "0 0 13 13"}>
              {s === 2 ? <rect x=".5" y=".5" width="14" height="14" fill="#e2e2e2" stroke="#b4b4b4" /> : <rect x=".5" y=".5" width="12" height="12" fill="#fff" stroke="#222" />}
              {s === 1 && <path d="M2.500 6.500l3 3 5-6.500" fill="none" stroke="#222" strokeWidth="1.200" />}
            </svg>
            <Fit w={w} className="ml-[5px]">{t}</Fit>
          </div>
        ))}
      </div>
    </div>
  );
}

const STATUS = [["CPlane", 57, 41], ["x 1361.784", 88, 60], ["y -62.664", 88, 50], ["z 0.000", 88, 39], ["Millimeters", 88, 60], ["Main Body", 173, 56, "l"], ["Grid Snap", 76, 55], ["Ortho", 47, 32, "b"], ["Planar", 54, 36], ["Osnap", 54, 37, "b"], ["SmartTrack", 86, 66, "b"], ["Gumball", 65, 47, "b"], ["Record History", 109, 82], ["Filter", 45, 27]];
function StatusBar() {
  return (
    <div className={"h-[20px] shrink-0 flex border-t border-[#98a2b1] text-[12px] text-black " + ARIAL}>
      {STATUS.map(([t, slot, w, k]) => (
        <div key={t} className={"h-[19px] shrink-0 flex items-center border-r border-[#98a2b1] " + (k === "l" ? "pl-[4px]" : "justify-center") + (k === "b" ? " font-bold bg-[#e3f2fc]" : "")} style={{ width: slot }}>
          {k === "l" && <i className="w-[13px] h-[13px] bg-[#808080] border border-black mr-[2px]" />}
          <Fit w={w}>{t}</Fit>
        </div>
      ))}
      <Fit w={139} className="ml-[3px] leading-[19px]">Absolute tolerance: 0.001</Fit>
      <div className="flex-1" />
      <div className="w-[8px] border-l border-[#98a2b1]" />
    </div>
  );
}

function TaskBar() {
  return (
    <div className={"h-[40px] shrink-0 flex text-white bg-linear-to-r from-[#213840] via-[#20303f] to-[#1a2642] " + SEGOE}>
      <svg className="w-[48px] h-[40px]"><path d="M16 14.300l6.800-1v6.200H16zM23.800 13.200l8.200-1.200v7.500h-8.200zM16 20.500h6.800v6.200l-6.800-1zM23.800 20.500H32V28l-8.200-1.200z" fill="#fff" /></svg>
      <div className="w-[344px] h-[40px] bg-[#f2f2f2] border border-[#c4c4c4] flex items-center">
        <svg className="w-[39px] h-[38px]" fill="none" stroke="#222" strokeWidth="1.400"><circle cx="21" cy="16" r="5.300" /><path d="M17 20l-6 7" /></svg>
        <Fit w={127} className="text-[15px] text-[#444]">Type here to search</Fit>
      </div>
      <svg className="w-[49px] h-[40px]"><circle cx="24" cy="20" r="7" fill="none" stroke="#fff" strokeWidth="1.800" /></svg>
      <svg className="w-[49px] h-[40px]" fill="none" stroke="#eee"><path d="M15.500 12v3h10v-3M15.500 17.500h10v6h-10zM15.500 28v-2.500h10V28M29.500 12v16" /><path d="M28 16h3v3h-3z" fill="#fff" stroke="none" /></svg>
      <svg className="w-[49px] h-[40px]"><path d="M14 11h8l2 3h12v14H14z" fill="#f0b429" /><path d="M14 14h22v14H14z" fill="#ffd765" /><path d="M18 20h15v8h-4v-4h-7v4h-4z" fill="#3f94dc" /><path d="M5 38h40v2H5z" fill="#76b9ed" /></svg>
      <svg className="w-[49px] h-[40px]" viewBox="0 0 49 40"><circle cx="25" cy="20" r="11" fill="#fbc116" /><path d="M15.500 14.500A11 11 0 0 0 24 31l5-8.500L25 20z" fill="#0f9d58" /><path d="M15.500 14.500A11 11 0 0 1 34.500 14.500H25L20 22z" fill="#db4437" /><circle cx="25" cy="20" r="5.200" fill="#fff" /><circle cx="25" cy="20" r="4.200" fill="#4285f4" /></svg>
      <svg className="w-[50px] h-[40px]"><path d="M12 15.500l2.500-1.500L31 26.500V32z" fill="#0b78c5" /><path d="M12 24.500L31 8v6L14.500 26z" fill="#168bd8" /><path d="M31 8l6 3v18l-6 3z" fill="#2ea9f3" /></svg>
      <div className="w-[48px] h-[40px] bg-[#4f6068] border-b-2 border-[#76b9ed] flex items-center justify-center"><RhinoMark className="w-[24px] h-[24px]" /></div>
      <div className="flex-1" />
      <svg className="w-[66px] h-[40px]" fill="none" stroke="#fff" strokeWidth="1.200"><path d="M3 23l5.500-5.500L14 23" /><path d="M29 14.500h12v9H29v-5M34 27h8M38 24v3M25.500 14.500h4v3h-4zM27.500 18v7" /><path d="M49.500 18v4h2.500l4 3.500v-11L52 18zM58 17.500q2 2.500 0 5" /><path d="M60.500 16q2.500 4 0 8M63 14.500q2 5.500 0 11" stroke="#889" /></svg>
      <div className="w-[42px] flex items-center justify-center text-[12px]"><Fit w={23}>ENG</Fit></div>
      <div className="w-[64px] flex flex-col items-center text-[12px] leading-[18px] pt-[1px]"><Fit w={27}>15:18</Fit><Fit w={58}>02/09/2021</Fit></div>
      <svg className="w-[51px] h-[40px]"><path d="M15 12h16v13h-7l-4 4v-4h-5z" fill="#fff" /><path d="M18 15.500h10M18 18.500h10M18 21.500h6" stroke="#1a2642" /><circle cx="30.500" cy="27.500" r="7.800" fill="#2b2d33" stroke="#777" /><text x="27.500" y="32" fontSize="12" fill="#fff">1</text></svg>
      <div className="w-[5px] border-l border-[#707a8c]" />
    </div>
  );
}

export default function App() {
  return (
    <div className="w-[1920px] h-[1080px] flex flex-col overflow-hidden bg-[#e0e3eb]">
      <TitleAndMenu />
      <CommandArea />
      <ToolTabs />
      <Toolbar />
      <div className="h-[822px] shrink-0 flex">
        <SideBar />
        <div className="w-[1656px] shrink-0"><Viewport /><ViewTabs /></div>
        <LayerPanel />
      </div>
      <SnapBar />
      <StatusBar />
      <TaskBar />
    </div>
  );
}
